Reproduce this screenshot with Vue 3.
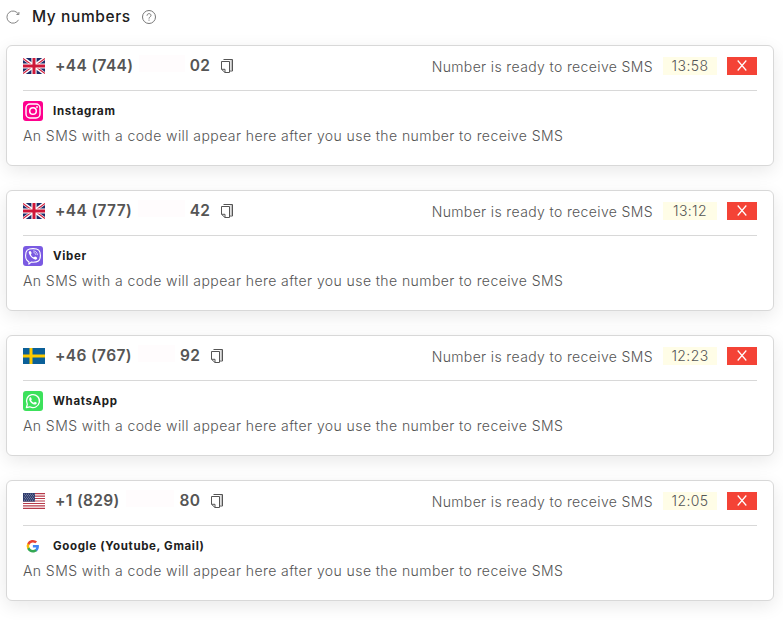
<script setup>
import { ref } from 'vue'

const numbers = ref([
  { id: 1, flag: 'gb', prefix: '+44 (744)', suffix: '02', hidden: 'long', service: 'Instagram', icon: 'instagram', time: '13:58' },
  { id: 2, flag: 'gb', prefix: '+44 (777)', suffix: '42', hidden: 'long', service: 'Viber', icon: 'viber', time: '13:12' },
  { id: 3, flag: 'se', prefix: '+46 (767)', suffix: '92', hidden: 'short', service: 'WhatsApp', icon: 'whatsapp', time: '12:23' },
  { id: 4, flag: 'us', prefix: '+1 (829)', suffix: '80', hidden: 'short', service: 'Google (Youtube, Gmail)', icon: 'google', time: '12:05' },
])

function removeNumber(id) {
  numbers.value = numbers.value.filter((item) => item.id !== id)
}
</script>

<template>
  <main class="numbers">
    <header class="numbers__header">
      <svg class="numbers__refresh" width="14" height="14" viewBox="0 0 14 14" fill="none" stroke="#858585">
        <path d="M12.5 9.8A6.1 6.1 0 1 1 12.4 4.2" />
        <path d="M12.9 2v2.5h-2.5" />
      </svg>
      <h1 class="numbers__title">My numbers</h1>
      <svg class="numbers__help" width="14" height="14" viewBox="0 0 14 14" fill="none" stroke="#777">
        <circle cx="7" cy="7" r="6.5" />
        <path d="M5 5.7c0-2.8 4-2.6 4-.3 0 1.5-2 1.5-2 3.2M7 9.6v1.1" />
      </svg>
    </header>

    <section v-for="item in numbers" :key="item.id" class="card">
      <div class="card__head">
        <svg v-if="item.flag === 'gb'" class="card__flag" viewBox="0 0 22 16">
          <path fill="#1c2b69" d="M0 0h22v16H0z" />
          <path stroke="#fff" stroke-width="3.2" d="M0 0l22 16M22 0L0 16" />
          <path stroke="#d3213f" stroke-width="1.1" d="M0 .5l11 8M11 7.5l11 8M22 .5l-11 8M11 7.5l-11 8" />
          <path stroke="#fff" stroke-width="5.2" d="M11 0v16M0 8h22" />
          <path stroke="#ce1738" stroke-width="3" d="M11 0v16M0 8h22" />
        </svg>
        <svg v-else-if="item.flag === 'se'" class="card__flag" viewBox="0 0 22 16">
          <path fill="#0b6098" d="M0 0h22v16H0z" />
          <path stroke="#fdc900" stroke-width="3" d="M8 0v16M0 8h22" />
        </svg>
        <svg v-else class="card__flag" viewBox="0 0 22 16">
          <path fill="#fff" d="M0 0h22v16H0z" />
          <path stroke="#b83b4a" stroke-width="1.23" d="M0 .6h22M0 3.1h22M0 5.5h22M0 8h22M0 10.5h22M0 12.9h22M0 15.4h22" />
          <path fill="#2e3b6b" d="M0 0h12v8.6H0z" />
          <path
            stroke="#b3b8cd"
            stroke-width=".8"
            stroke-dasharray=".8 1.2"
            d="M1 1.2h10.5M2 2.7h9.5M1 4.2h10.5M2 5.7h9.5M1 7.2h10.5"
          />
        </svg>

        <div class="card__number" :class="`card__number--${item.hidden}`">
          <span class="card__phone">{{ item.prefix }}</span>
          <span class="card__hidden"></span>
          <span class="card__phone card__phone--end">{{ item.suffix }}</span>
        </div>

        <svg class="card__copy" width="12" height="14" viewBox="0 0 12 14" fill="none" stroke="#555">
          <path d="M.5 2.5h8v11H4L.5 10.3z" />
          <path d="M.5 10.3H4v3.2" />
          <path d="M2.5.5h9V12h-3" />
          <path stroke="#a5a5a5" d="M10.2 1v10.5" />
        </svg>

        <span class="card__status">Number is ready to receive SMS</span>
        <span class="card__time">{{ item.time }}</span>
        <button type="button" class="card__close" aria-label="Cancel" @click="removeNumber(item.id)">
          <svg width="12" height="11" viewBox="0 0 12 11" fill="none" stroke="#fff" stroke-width="1.2">
            <path d="M1.7.5l8.6 10M10.3.5l-8.6 10" />
          </svg>
        </button>
      </div>

      <div class="card__service">
        <svg v-if="item.icon === 'instagram'" class="card__icon" viewBox="0 0 20 20" fill="none">
          <rect width="20" height="20" rx="3" fill="#ff008d" />
          <rect x="3" y="3" width="14" height="14" rx="4" stroke="#fff" stroke-width="1.4" />
          <circle cx="10" cy="10" r="3.3" stroke="#fff" stroke-width="1.5" />
          <circle cx="14" cy="6" r=".9" fill="#fff" />
        </svg>
        <svg v-else-if="item.icon === 'viber'" class="card__icon" viewBox="0 0 20 20" fill="none">
          <rect width="20" height="20" rx="3" fill="#7a5ae2" />
          <path
            stroke="#fff"
            stroke-width="1.1"
            stroke-linejoin="round"
            d="M10 2.6c-5.4 0-7.4 1.7-7.4 7 0 3.5.9 5.2 3.3 6.1v2.5l2.3-2.1c7 .5 9.2-1.2 9.2-6.5 0-5.3-2-7-7.4-7z"
          />
          <path
            fill="#fff"
            d="M6.3 5.3l.9-.4c.6.3 1.2 1.2 1.5 2 .2.7-.8.9-.7 1.5.3 1.3 1.3 2.4 2.6 2.8.6.1.8-.9 1.5-.8.8.2 1.7.9 2.1 1.5.2.7-.7 1.7-1.4 1.8-3-.6-6.6-4-7.1-7.1 0-.5.2-1 .6-1.3z"
          />
          <path stroke="#fff" stroke-width=".7" d="M10.2 4.9c2.5 0 4.2 1.8 4.2 4.2M10.5 6.6c1.4.1 2.2.9 2.3 2.3" />
        </svg>
        <svg v-else-if="item.icon === 'whatsapp'" class="card__icon" viewBox="0 0 20 20" fill="none">
          <rect width="20" height="20" rx="3" fill="#3ce15b" />
          <path
            stroke="#fff"
            stroke-width="1.3"
            stroke-linejoin="round"
            d="M3.4 16.7l.9-3.4a6.5 6.5 0 1 1 2.5 2.5z"
          />
          <path
            fill="#fff"
            d="M7.3 6.2h.6l.9 2c.1.4-.5.8-.7 1.1.6 1.2 1.5 2 2.8 2.5.4-.2.7-1.1 1.1-1l1.8.9c.1 1-.8 1.8-1.8 1.9-2.7-.1-5.7-3.1-5.8-5.4 0-.8.5-1.7 1.1-2z"
          />
        </svg>
        <svg v-else class="card__icon" viewBox="-5.3 -5.8 35 35">
          <path fill="#4285f4" d="M22.6 12.3c0-.8-.1-1.6-.2-2.3H12v4.5h6a5.2 5.2 0 0 1-2.2 3.4v2.8h3.5c2.1-2 3.3-4.8 3.3-8.4z" />
          <path fill="#34a853" d="M12 23c3 0 5.5-1 7.3-2.6l-3.5-2.8c-1 .7-2.3 1.1-3.8 1.1-2.9 0-5.3-1.9-6.2-4.6H2.2V17A11 11 0 0 0 12 23z" />
          <path fill="#fbbc05" d="M5.8 14.1a6.6 6.6 0 0 1 0-4.2V7H2.2a11 11 0 0 0 0 10z" />
          <path fill="#ea4335" d="M12 5.4c1.6 0 3.1.6 4.2 1.6l3.2-3.1A11 11 0 0 0 2.2 7l3.6 2.9C6.7 7.3 9.1 5.4 12 5.4z" />
        </svg>
        <h2 class="card__name">{{ item.service }}</h2>
      </div>

      <p class="card__message">
        An SMS with a code will appear here after you use the number to receive SMS
      </p>
    </section>
  </main>
</template>

<style>
body {
  margin: 0;
  background: #fff;
}
</style>

<style scoped>
.numbers {
  box-sizing: border-box;
  height: 620px;
  padding: 0 9px 0 6px;
  overflow: hidden;
  font-family: Inter, 'Open Sans', sans-serif;
  color: #555;
}

.numbers__header {
  display: flex;
  align-items: center;
  height: 33px;
  margin-bottom: 12px;
}

.numbers__title {
  width: 99px;
  margin: 0 11px 0 12px;
  font-size: 15.5px;
  font-weight: 500;
  letter-spacing: 0.6px;
  white-space: nowrap;
  color: #202020;
}

.card {
  box-sizing: border-box;
  height: 121px;
  margin-bottom: 24px;
  padding: 0 16px;
  border: 1px solid #d8d8d8;
  border-radius: 6px;
  background: #fff;
  box-shadow: 0 5px 18px rgba(0, 0, 0, 0.09);
}

.card__head {
  box-sizing: border-box;
  display: flex;
  align-items: center;
  height: 45px;
  padding-bottom: 4px;
  border-bottom: 1px solid #d8d8d8;
}

.card__flag {
  width: 22px;
  height: 16px;
  margin-right: 10px;
}

.card__number {
  display: flex;
  align-items: center;
  padding-bottom: 1px;
}

.card__number--long {
  width: 155px;
}

.card__number--short {
  width: 145px;
}

.card__phone {
  font-size: 15.5px;
  font-weight: 600;
  letter-spacing: 0.35px;
  white-space: nowrap;
}

.card__phone--end {
  margin-right: -0.35px;
}

.card__hidden {
  flex: 1;
  height: 17px;
  margin: 0 5px 4px 6px;
  background: #fffcfd;
}

.card__copy {
  margin-left: 11px;
}

.card__status {
  margin-left: auto;
  font-size: 14px;
  font-weight: 300;
  letter-spacing: 0.37px;
  white-space: nowrap;
}

.card__time {
  width: 54px;
  height: 18px;
  margin: 0 10px;
  background: #fffde7;
  font-size: 14px;
  font-weight: 300;
  line-height: 18px;
  letter-spacing: 0.4px;
  text-align: center;
}

.card__close {
  display: flex;
  align-items: center;
  justify-content: center;
  width: 30px;
  height: 18px;
  padding: 0 0 2px;
  border: none;
  background: #f44336;
  cursor: pointer;
}

.card__service {
  display: flex;
  align-items: center;
  height: 20px;
  margin-top: 10px;
}

.card__icon {
  width: 20px;
  height: 20px;
  margin-right: 10px;
}

.card__name {
  margin: 0;
  padding-bottom: 1px;
  font-size: 11.5px;
  font-weight: 700;
  letter-spacing: 0.65px;
  color: #202020;
}

.card__message {
  margin: 5px 0 0;
  font-size: 14px;
  font-weight: 300;
  line-height: 20px;
  letter-spacing: 0.42px;
  white-space: nowrap;
}
</style>
